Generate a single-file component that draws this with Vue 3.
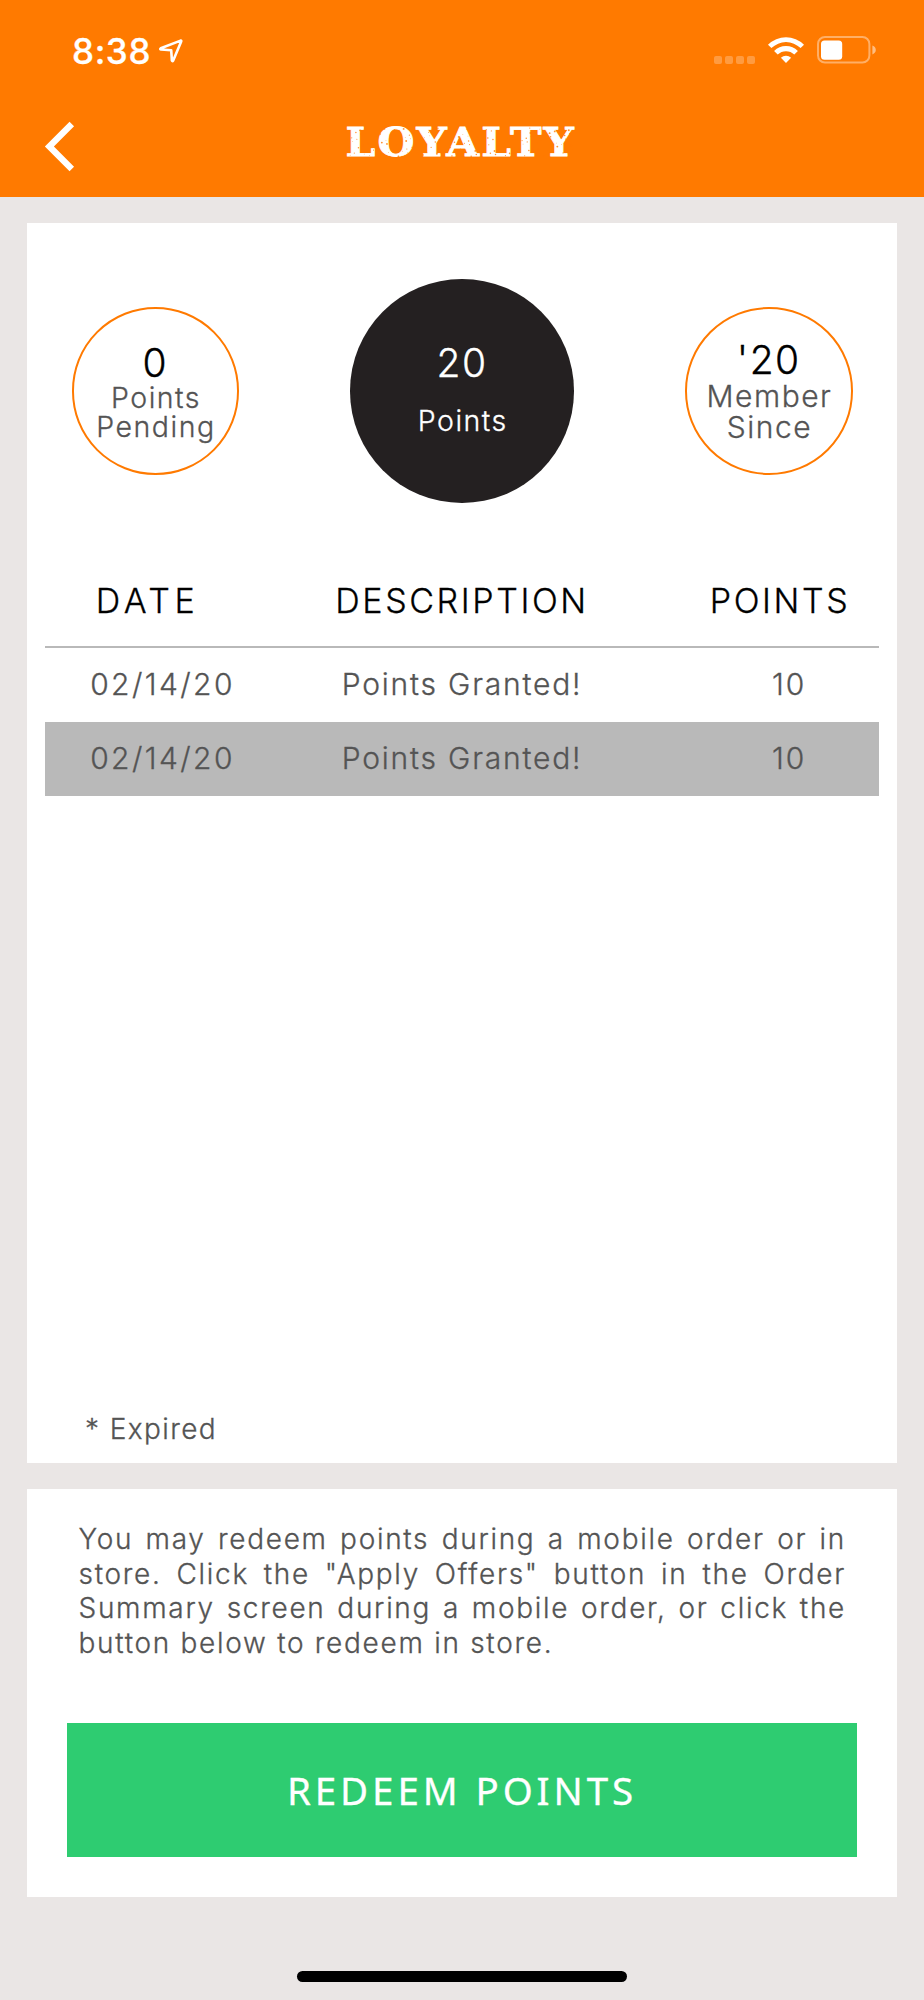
<script setup>
import { computed, ref } from 'vue'

// points history
const history = ref([
	{ id: 1, date: '02/14/20', description: 'Points Granted!', points: 10 },
	{ id: 2, date: '02/14/20', description: 'Points Granted!', points: 10 }
])

const pending = ref(0)
const memberSince = ref("'20")

// total of all granted points
const total = computed(() => {
	return history.value.reduce((prev, item) => prev + item.points, 0)
})

// worn print flecks over the title
const flecks = Array.from({ length: 170 }, (_, i) => ({
	x: (i * 61.8034) % 228,
	y: 1 + ((i * 17.31 + (i % 7) * 3.7) % 29),
	r: 0.4 + (i % 4) * 0.18
}))
</script>

<template>
	<div class="page">
		<header class="header">
			<div class="status">
				<span class="time">8:38</span>
				<svg class="location" width="26" height="26" viewBox="0 0 26 26">
					<path
						d="M22.6 2.6 L2.8 10.2 Q1.6 11.1 3 11.5 L13.2 12.2 L13.9 22.6 Q14.4 23.8 15.2 22.6 L23.2 3.6 Q23.5 2.3 22.6 2.6 Z" />
				</svg>
				<div class="signal"><i v-for="n in 4" :key="n"></i></div>
				<svg class="wifi" width="38" height="28" viewBox="0 0 38 28">
					<path d="M1 8.7 A25.6 25.6 0 0 1 37 8.7 L33.6 12.1 A20.8 20.8 0 0 0 4.4 12.1 Z" />
					<path d="M7.1 14.9 A17 17 0 0 1 30.9 14.9 L27.3 18.5 A12 12 0 0 0 10.7 18.5 Z" />
					<path d="M13.9 21.8 A7.6 7.6 0 0 1 24.1 21.8 L19 27 Z" />
				</svg>
				<svg class="battery" width="60" height="28" viewBox="0 0 60 28">
					<rect x="1" y="1" width="51.4" height="25.6" rx="7" class="shell" />
					<rect x="4" y="4.6" width="21.2" height="19.2" rx="3.5" fill="#fff" />
					<path d="M55.4 9.6 Q58.8 11 58.8 14 Q58.8 17 55.4 18.4 Z" class="nub" />
				</svg>
			</div>
			<div class="nav">
				<svg class="back" width="34" height="52" viewBox="0 0 34 52">
					<path d="M28.8 3.1 L6.4 25.5 L28.8 47.9" />
				</svg>
				<div class="title">
					<h1>LOYALTY</h1>
					<svg class="flecks" width="228" height="32" viewBox="0 0 228 32">
						<circle v-for="(f, i) in flecks" :key="i" :cx="f.x" :cy="f.y" :r="f.r" />
					</svg>
				</div>
			</div>
		</header>

		<section class="card points-card">
			<div class="circles">
				<div class="circle">
					<b>{{ pending }}</b>
					<span>Points</span>
					<span>Pending</span>
				</div>
				<div class="circle total">
					<b>{{ total }}</b>
					<span>Points</span>
				</div>
				<div class="circle member">
					<b>{{ memberSince }}</b>
					<span>Member</span>
					<span>Since</span>
				</div>
			</div>

			<div class="table">
				<div class="row head">
					<span>DATE</span>
					<span>DESCRIPTION</span>
					<span>POINTS</span>
				</div>
				<div v-for="item in history" :key="item.id" class="row">
					<span>{{ item.date }}</span>
					<span>{{ item.description }}</span>
					<span>{{ item.points }}</span>
				</div>
			</div>

			<p class="expired">* Expired</p>
		</section>

		<section class="card redeem-card">
			<p class="info">
				<span>You may redeem points during a mobile order or in</span>
				<span>store. Click the "Apply Offers" button in the Order</span>
				<span>Summary screen during a mobile order, or click the</span>
				<span>button below to redeem in store.</span>
			</p>
			<button class="redeem">REDEEM POINTS</button>
		</section>

		<div class="home"></div>
	</div>
</template>

<style>
	body {
		background: #eae6e5;
	}
</style>

<style scoped>
	.page {
		width: 924px;
		height: 2000px;
		display: flex;
		flex-direction: column;
		align-items: center;
		overflow: hidden;
		box-sizing: border-box;
		background: #eae6e5;
		color: #545454;
		font-family: Inter, 'Liberation Sans', sans-serif;
		font-weight: 300;
		-webkit-text-stroke: 0.3px currentColor;
	}
	p {
		margin: 0;
	}
	.header {
		width: 100%;
		height: 196.5px;
		flex: none;
		background: #ff7a00;
		color: #fff;
	}
	.status {
		height: 80px;
		box-sizing: border-box;
		padding: 20px 47px 0 72px;
		display: flex;
	}
	.time {
		font-size: 35px;
		font-weight: 500;
		line-height: 62px;
		letter-spacing: 0.6px;
		width: 86px;
		white-space: nowrap;
	}
	.location {
		margin-top: 18px;
	}
	.location path {
		fill: none;
		stroke: #fff;
		stroke-width: 2.6;
		stroke-linejoin: round;
	}
	.signal {
		margin: 36px 12px 0 auto;
		display: flex;
		gap: 3px;
	}
	.signal i {
		width: 8px;
		height: 7.5px;
		border-radius: 2px;
		background: rgba(255, 255, 255, 0.25);
	}
	.wifi {
		margin: 16px 12px 0 0;
		fill: #fff;
	}
	.battery {
		margin-top: 16px;
	}
	.shell {
		fill: none;
		stroke: #fff;
		stroke-width: 2;
		opacity: 0.4;
	}
	.nub {
		fill: #fff;
		opacity: 0.5;
	}
	.nav {
		height: 116px;
		display: grid;
		grid-template-columns: 43px 1fr 48px;
	}
	.back {
		margin: 41px 0 0 43px;
		fill: none;
		stroke: #fff;
		stroke-width: 6.4;
	}
	.title {
		position: relative;
		justify-self: center;
		margin-top: 36px;
	}
	h1 {
		margin: 0 -2px 0 0;
		font-family: 'DejaVu Serif', serif;
		font-size: 38.5px;
		font-weight: bold;
		line-height: 53px;
		letter-spacing: 2px;
		transform: scaleX(1.1);
		-webkit-text-stroke: 0.8px #fff;
	}
	.flecks {
		position: absolute;
		left: 50%;
		top: 11px;
		margin-left: -114px;
		fill: #ff7a00;
		opacity: 0.8;
	}
	.card {
		width: 870px;
		box-sizing: border-box;
		flex: none;
		background: #fff;
		display: flex;
		flex-direction: column;
	}
	.points-card {
		margin-top: 26.5px;
		height: 1239.7px;
		padding: 56px 18px 14px;
	}
	.circles {
		display: flex;
		justify-content: space-between;
		align-items: center;
		padding: 0 26.5px;
	}
	.circle {
		width: 167.5px;
		height: 167.5px;
		box-sizing: border-box;
		border: 2px solid #ff7a00;
		border-radius: 50%;
		padding-top: 34px;
		display: flex;
		flex-direction: column;
		align-items: center;
		font-size: 28.5px;
		line-height: 29px;
		letter-spacing: 1.5px;
	}
	.circle span {
		margin-right: -1.5px;
	}
	.circle b {
		color: #000;
		font-size: 39px;
		font-weight: 300;
		line-height: 40px;
	}
	.circle.total {
		width: 223.5px;
		height: 223.5px;
		border: none;
		padding-top: 64px;
		background: #242021;
		color: #fff;
	}
	.total b {
		color: #fff;
		margin-bottom: 23px;
	}
	.circle.member {
		padding-top: 31px;
		font-size: 30px;
		line-height: 31px;
	}
	.member b {
		margin-bottom: 1px;
	}
	.table {
		margin-top: 62px;
	}
	.row {
		display: grid;
		grid-template-columns: 235px 1fr 235px;
		text-align: center;
		font-size: 30px;
		line-height: 73px;
		height: 74px;
		letter-spacing: 1.8px;
	}
	.row span:first-child {
		letter-spacing: 2.4px;
	}
	.row span:last-child {
		padding-left: 55px;
	}
	.row:nth-child(odd):not(.head) {
		background: #b9b9b9;
	}
	.row.head {
		height: 81px;
		line-height: 71.5px;
		border-bottom: 2.5px solid #b9b9b9;
		color: #000;
		font-size: 34px;
		letter-spacing: 2.6px;
	}
	.head span:first-child {
		padding-right: 30px;
		letter-spacing: 4.5px;
	}
	.row.head span:last-child {
		padding-left: 37px;
	}
	.expired {
		margin-top: auto;
		padding-left: 40px;
		font-size: 28px;
		line-height: 40px;
		letter-spacing: 1.4px;
	}
	.redeem-card {
		margin-top: 26.3px;
		height: 408px;
		padding: 33px 40px 40px;
	}
	.info {
		padding: 0 11px 0 11.5px;
		font-size: 28px;
		line-height: 34.7px;
		letter-spacing: 1.7px;
	}
	.info span {
		display: block;
		white-space: nowrap;
		text-align-last: justify;
	}
	.info span:last-child {
		text-align-last: left;
	}
	.redeem {
		margin-top: auto;
		height: 134px;
		border: none;
		padding: 0;
		background: #2ecc71;
		color: #fff;
		font-family: 'Noto Sans', sans-serif;
		font-size: 38.5px;
		letter-spacing: 3.9px;
	}
	.home {
		width: 330px;
		height: 11px;
		border-radius: 6px;
		margin: auto 0 18px;
		background: #000;
	}
</style>
